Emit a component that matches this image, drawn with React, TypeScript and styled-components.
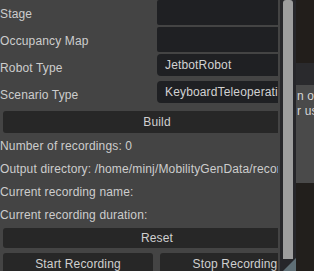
import styled, { createGlobalStyle } from 'styled-components';

// ------------------- Global -------------------

const GlobalStyle = createGlobalStyle`
  html, body {
    margin: 0;
    padding: 0;
    background: #211e1b;
  }
  body {
    font-family: "Liberation Sans", Arial, sans-serif;
    font-size: 12px;
    letter-spacing: 0.15px;
    color: #cdcdcd;
  }
`;

// ------------------- Styled Components -------------------

const Screen = styled.div`
  display: flex;
  width: 314px;
  height: 271px;
  overflow: hidden;
`;

const Panel = styled.div`
  width: 280px;
  flex-shrink: 0;
  background-color: #444444;
`;

const Clip = styled.div`
  width: 278px;
  height: 100%;
  overflow: hidden;
`;

const Content = styled.div`
  width: 312px;
  display: flex;
  flex-direction: column;
`;

const Row = styled.div`
  display: grid;
  grid-template-columns: 157px 1fr;
  height: 27px;
`;

const Label = styled.div`
  line-height: 28px;
  white-space: nowrap;
`;

const Field = styled.div<{ $combo?: boolean }>`
  height: ${({ $combo }) => ($combo ? '22px' : '25px')};
  background-color: #1f2023;
  border-radius: ${({ $combo }) => ($combo ? '4px' : '2px')};
  padding-left: 8px;
  line-height: ${({ $combo }) => ($combo ? '23px' : '25px')};
  color: #d2d2d2;
  white-space: nowrap;
  overflow: hidden;
`;

const Button = styled.div<{ $height?: number; $width?: number }>`
  height: ${({ $height }) => $height ?? 22}px;
  line-height: ${({ $height }) => ($height ?? 22) + 1}px;
  width: ${({ $width }) => $width ?? 308}px;
  margin-left: 3px;
  background-color: #272727;
  border-radius: 3px;
  text-align: center;
  color: #d0d0d0;
  white-space: nowrap;
  flex-shrink: 0;
`;

const Info = styled.div`
  line-height: 22px;
  height: 22px;
  margin-top: 1px;
  white-space: nowrap;
`;

const ButtonRow = styled.div`
  display: flex;
  gap: 7px;
  margin-top: 5px;
`;

const ScrollTrack = styled.div`
  position: relative;
  width: 16px;
  flex-shrink: 0;
  background-color: #26262a;
  padding: 0 3px;
  box-sizing: border-box;
`;

const Thumb = styled.div`
  height: 259px;
  background-color: #9e9e9e;
  border-radius: 3px 3px 0 0;
`;

const Grip = styled.svg`
  position: absolute;
  right: 0;
  bottom: 0;
`;

const Side = styled.div`
  flex: 1;
  display: flex;
  flex-direction: column;
  overflow: hidden;
`;

const Block = styled.div<{ $h?: number; $bg: string }>`
  height: ${({ $h }) => ($h ? `${$h}px` : 'auto')};
  flex: ${({ $h }) => ($h ? '0 0 auto' : '1')};
  background-color: ${({ $bg }) => $bg};
`;

const SideText = styled.div`
  padding: 4px 0 0 1px;
  line-height: 15px;
  white-space: nowrap;
  color: #d4d4d4;
`;

// ------------------- App -------------------

export default function App() {
    return (
        <>
            <GlobalStyle />
            <Screen>
                <Panel>
                    <Clip>
                        <Content>
                            <Row>
                                <Label>Stage</Label>
                                <Field />
                            </Row>
                            <Row>
                                <Label>Occupancy Map</Label>
                                <Field />
                            </Row>
                            <Row>
                                <Label>Robot Type</Label>
                                <Field $combo>JetbotRobot</Field>
                            </Row>
                            <Row>
                                <Label>Scenario Type</Label>
                                <Field $combo>KeyboardTeleoperationScenario</Field>
                            </Row>
                            <Button style={{ marginTop: 3 }}>Build</Button>
                            <Info style={{ marginTop: 2 }}>Number of recordings: 0</Info>
                            <Info>Output directory: /home/minj/MobilityGenData/recordings</Info>
                            <Info>Current recording name:</Info>
                            <Info>Current recording duration:</Info>
                            <Button $height={20} style={{ marginTop: 2 }}>Reset</Button>
                            <ButtonRow>
                                <Button $width={150}>Start Recording</Button>
                                <Button $width={150} style={{ marginLeft: 0 }}>Stop Recording</Button>
                            </ButtonRow>
                        </Content>
                    </Clip>
                </Panel>
                <ScrollTrack>
                    <Thumb />
                    <Grip width="14" height="13" viewBox="0 0 14 13">
                        <polygon points="1,13 14,0 14,13" fill="#5f6f76" />
                    </Grip>
                </ScrollTrack>
                <Side>
                    <Block $h={63} $bg="#221e1b" />
                    <Block $h={22} $bg="#2a2a2d" />
                    <Block $h={98} $bg="#4a4a4a">
                        <SideText>
                            n our
                            <br />
                            r use
                        </SideText>
                    </Block>
                    <Block $bg="#221f1c" />
                </Side>
            </Screen>
        </>
    );
}
